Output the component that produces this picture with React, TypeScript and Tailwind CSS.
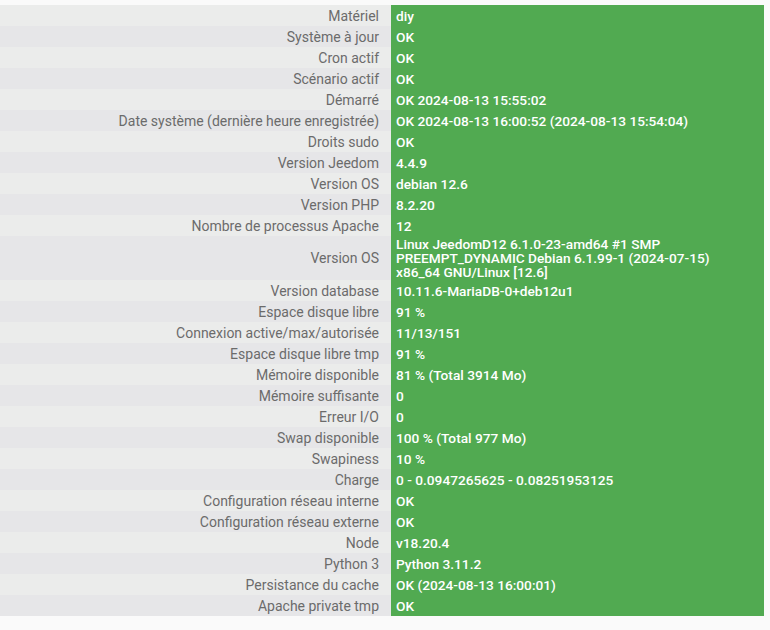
import React from "react";

const rows: [string, React.ReactNode][] = [
  ["Matériel", "diy"],
  ["Système à jour", "OK"],
  ["Cron actif", "OK"],
  ["Scénario actif", "OK"],
  ["Démarré", "OK 2024-08-13 15:55:02"],
  ["Date système (dernière heure enregistrée)", "OK 2024-08-13 16:00:52 (2024-08-13 15:54:04)"],
  ["Droits sudo", "OK"],
  ["Version Jeedom", "4.4.9"],
  ["Version OS", "debian 12.6"],
  ["Version PHP", "8.2.20"],
  ["Nombre de processus Apache", "12"],
  [
    "Version OS",
    "Linux JeedomD12 6.1.0-23-amd64 #1 SMP PREEMPT_DYNAMIC Debian 6.1.99-1 (2024-07-15) x86_64 GNU/Linux [12.6]",
  ],
  ["Version database", "10.11.6-MariaDB-0+deb12u1"],
  ["Espace disque libre", "91 %"],
  ["Connexion active/max/autorisée", "11/13/151"],
  ["Espace disque libre tmp", "91 %"],
  ["Mémoire disponible", "81 % (Total 3914 Mo)"],
  ["Mémoire suffisante", "0"],
  ["Erreur I/O", "0"],
  ["Swap disponible", "100 % (Total 977 Mo)"],
  ["Swapiness", "10 %"],
  ["Charge", "0 - 0.0947265625 - 0.08251953125"],
  ["Configuration réseau interne", "OK"],
  ["Configuration réseau externe", "OK"],
  ["Node", "v18.20.4"],
  ["Python 3", "Python 3.11.2"],
  ["Persistance du cache", "OK (2024-08-13 16:00:01)"],
  ["Apache private tmp", "OK"],
];

export default function App() {
  return (
    <div
      className="min-h-[630px] w-[770px] bg-[#fafafa] pt-[5px]"
      style={{ fontFamily: "Roboto, 'Liberation Sans', sans-serif" }}
    >
      <div className="grid w-[764px] grid-cols-[391px_373px] text-[14px]">
        {rows.map(([label, value], i) => (
          <React.Fragment key={i}>
            <div
              className={`flex min-h-[21px] items-center justify-end pr-[12px] leading-[14px] text-[#6b6b6b] ${
                i % 2 === 0 ? "bg-[#ebeceb]" : "bg-[#e6e6e8]"
              }`}
            >
              {label}
            </div>
            <div className="flex min-h-[21px] items-center bg-[#51aa51] py-px pl-[5px] pr-[20px] text-[13.7px] font-medium leading-[14px] text-white">
              <span>{value}</span>
            </div>
          </React.Fragment>
        ))}
      </div>
    </div>
  );
}
